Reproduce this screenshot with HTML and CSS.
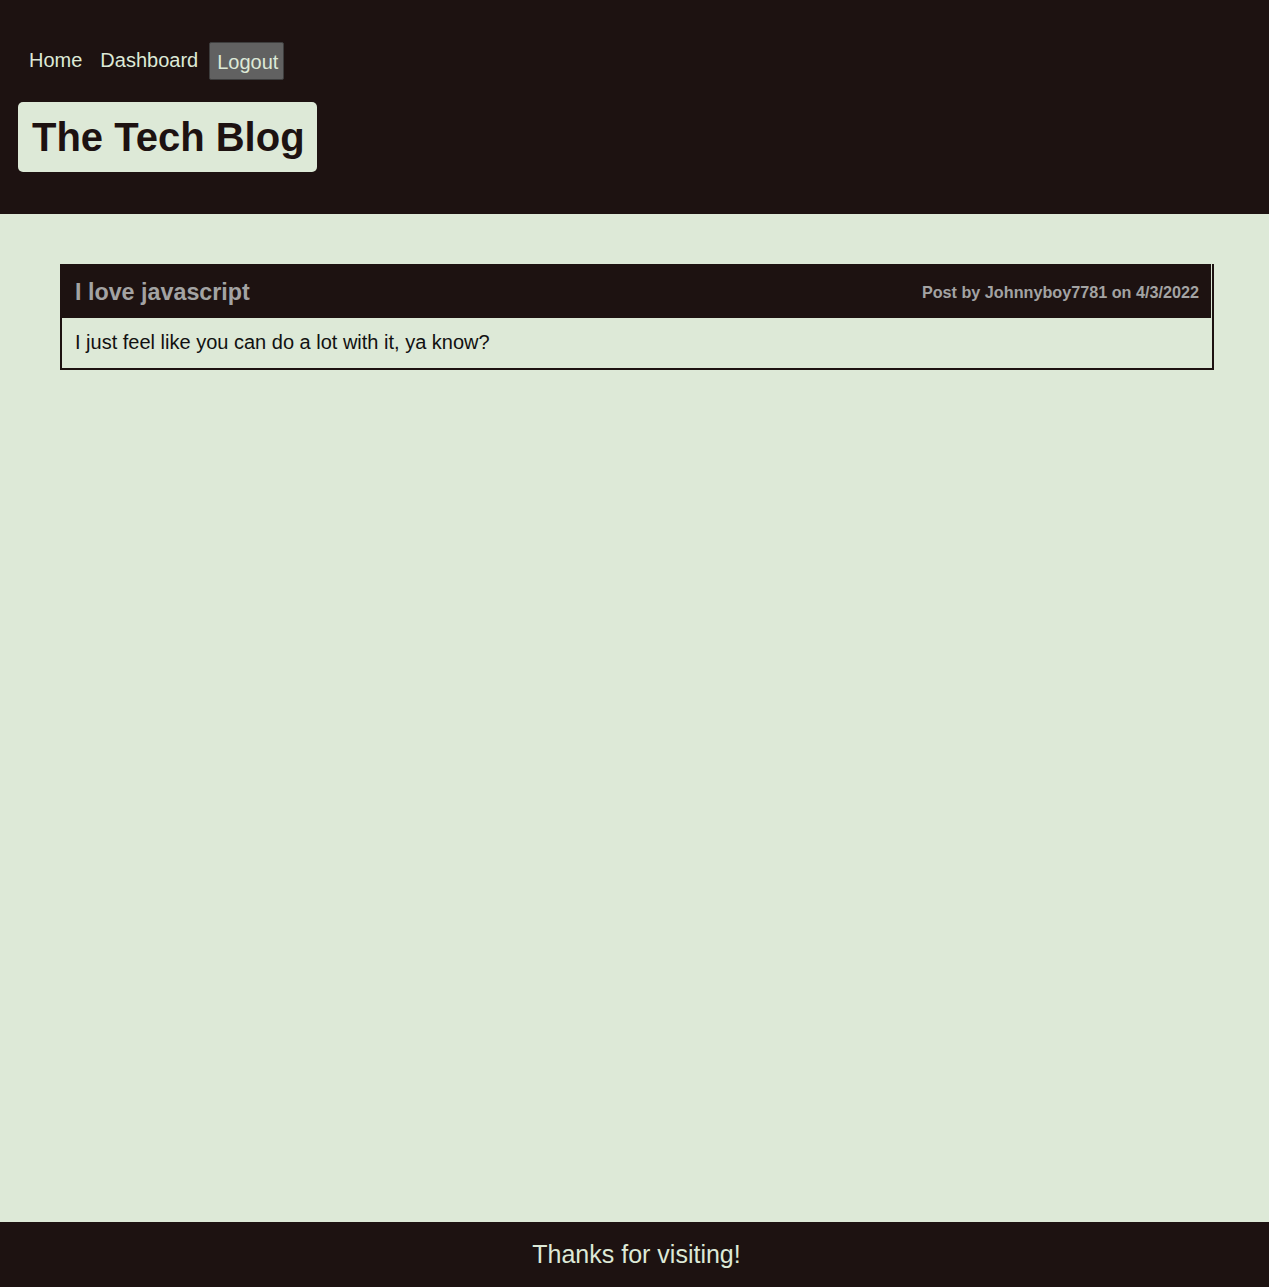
FILE: index.html
```html
<!DOCTYPE html>
<html lang="en">
<head>
<meta charset="utf-8">
<title>The Tech Blog</title>
<link rel="stylesheet" href="styles.css">
</head>
<body>
<header class="site-header">
  <nav class="nav">
    <a class="nav-link" href="#">Home</a>
    <a class="nav-link" href="#">Dashboard</a>
    <button class="logout">Logout</button>
  </nav>
  <h1 class="brand">The Tech Blog</h1>
</header>
<main class="main">
  <article class="post">
    <div class="post-head">
      <h2 class="post-title">I love javascript</h2>
      <span class="post-meta">Post by Johnnyboy7781 on 4/3/2022</span>
    </div>
    <p class="post-body">I just feel like you can do a lot with it, ya know?</p>
  </article>
</main>
<footer class="site-footer">Thanks for visiting!</footer>
</body>
</html>
```
FILE: styles.css
```css
html, body {
  margin: 0;
  padding: 0;
}
body {
  min-height: 100vh;
  display: flex;
  flex-direction: column;
  background: #dde9d7;
  font-family: "Liberation Sans", Arial, sans-serif;
  color: #111;
}
.site-header {
  background: #1d1211;
  padding: 42px 18px 42px 18px;
  display: flex;
  flex-direction: column;
  align-items: flex-start;
}
.nav {
  display: flex;
  align-items: center;
  height: 38px;
  padding-left: 11px;
}
.nav-link {
  color: #dde9d7;
  text-decoration: none;
  font-size: 20px;
  margin-right: 18px;
  margin-top: -1px;
}
.nav-link + .nav-link {
  margin-right: 11px;
}
.logout {
  background: #616161;
  color: #dde9d7;
  border: 1px solid #3d3d3d;
  border-radius: 2px;
  font-family: "Liberation Sans", Arial, sans-serif;
  font-size: 20px;
  height: 38px;
  padding: 2px 5px 0 7px;
}
.brand {
  margin: 22px 0 0 0;
  background: #dde9d7;
  color: #1d1211;
  border-radius: 5px;
  font-size: 40px;
  font-weight: bold;
  height: 70px;
  line-height: 70px;
  padding: 0 12px 0 14px;
  box-sizing: border-box;
}
.main {
  flex: 1;
  padding: 50px 55px 0 60px;
}
.post {
  border: 2px solid #1d1211;
  border-top: 0;
}
.post-head {
  background: #1d1211;
  margin: 0 1px 0 -2px;
  height: 54px;
  box-sizing: border-box;
  display: flex;
  align-items: center;
  justify-content: space-between;
  padding: 2px 12px 0 15px;
}
.post-title {
  margin: 0;
  color: #a3a3a3;
  font-size: 23.3px;
  font-weight: bold;
}
.post-meta {
  color: #a3a3a3;
  font-size: 16.2px;
  font-weight: bold;
}
.post-body {
  margin: 0;
  padding: 0 13px;
  height: 50px;
  line-height: 49px;
  font-size: 20px;
  color: #111;
}
.site-footer {
  background: #1d1211;
  color: #dde9d7;
  text-align: center;
  font-size: 25px;
  height: 65px;
  line-height: 65px;
  padding-left: 4px;
}
```
